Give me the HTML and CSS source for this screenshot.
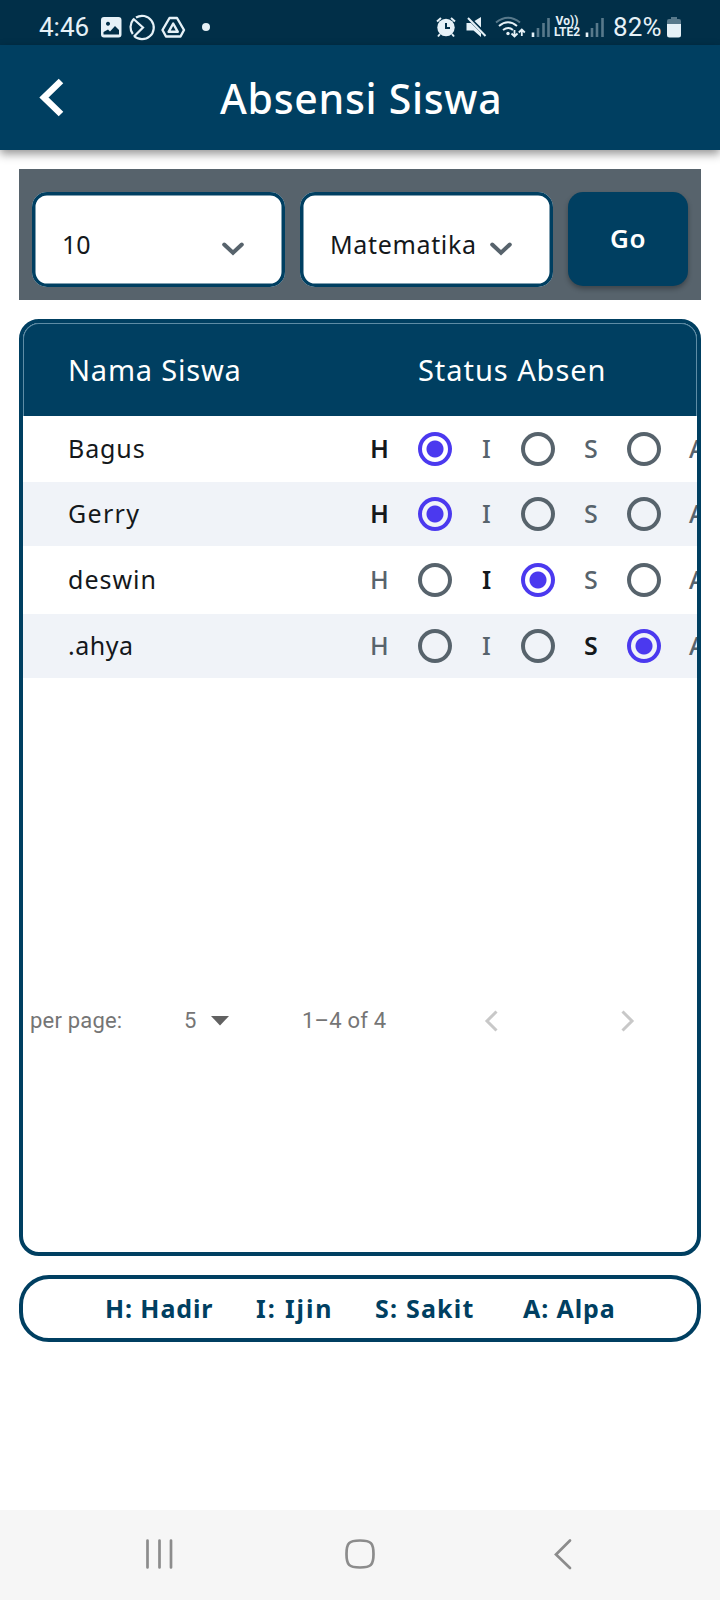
FILE: index.html
```html
<!DOCTYPE html>
<html lang="id">
<head>
<meta charset="utf-8">
<title>Absensi Siswa</title>
<link rel="stylesheet" href="styles.css">
</head>
<body>
<div class="statusbar">
  <span class="clock">4:46</span>
  <svg class="status-left" width="112" height="30" viewBox="100 11 112 30" fill="none" stroke="#e6f1f7" stroke-width="1.8">
    <path fill="#e6f1f7" stroke="none" fill-rule="evenodd" d="M104 16h14.500a3 3 0 0 1 3 3v14.500a3 3 0 0 1-3 3H104a3 3 0 0 1-3-3V19a3 3 0 0 1 3-3zM103.500 31v2.500h15.500V29l-4-4-5 5.500-2-2zM108 20.800a2 2 0 1 0 .01 0z"/>
    <path stroke-width="2.200" d="M136 16.500a11.700 11.700 0 1 1-2 18.500M132.800 33a11.700 11.700 0 0 1 .5-14.500M133 17.500l10 9-9 9"/>
    <path stroke-width="2.400" stroke-linejoin="round" d="M169.500 17h7.500l7 12-3.500 6.500h-14.500l-3.500-6.500zM173.200 22.500l4.600 8.300h-9.200z"/>
    <circle cx="206" cy="26" r="4" fill="#e6f1f7" stroke="none"/>
  </svg>
  <div class="status-right">
    <svg width="118" height="26" viewBox="434 13 118 26" fill="none" stroke="#e6f1f7" stroke-width="2">
      <g>
        <circle cx="446" cy="26.500" r="8.700" fill="#e6f1f7" stroke="none"/>
        <path d="M437 20.500l4-3.500M455 20.500l-4-3.500M440 33l-2 2.500M452 33l2 2.500"/>
        <path stroke="#012f48" d="M446 22v5h4"/>
      </g>
      <path fill="#e6f1f7" stroke="none" d="M466.500 22h4.500l10 10v4l-7.500-6.500h-7zM474.500 20l6.500-4v10.500z"/>
      <path d="M468 17l17.500 18"/>
      <path stroke="#58798b" d="M496 21.500q12-9.500 24 0"/>
      <path d="M499 25q9-7.500 18 0M503 29q5.500-4 10 0"/>
      <circle cx="508" cy="32.500" r="1.700" fill="#e6f1f7" stroke="none"/>
      <path d="M514.500 29v6.500m-3-3l3 3 3-3M521.800 35v-6.500m-3 3l3-3 3 3" stroke-width="1.800"/>
      <path stroke-width="2.600" d="M533 31.500v4.500"/>
      <path stroke="#58798b" stroke-width="2.600" d="M538 27v9M543.500 22v14M548.500 17v19"/>
    </svg>
    <span class="volte"><span>Vo))</span><span>LTE2</span></span>
    <svg width="20" height="26" viewBox="586 13 20 26" fill="none" stroke="#58798b" stroke-width="2.600">
      <path stroke="#e6f1f7" d="M588 31.500v4.500"/>
      <path d="M593 27v9M598 22v14M603.500 17v19"/>
    </svg>
    <span class="percent">82%</span>
    <svg width="16" height="24" viewBox="666 14 16 24">
      <path fill="#58798b" d="M671 16h6v2h2q2 0 2 2v3h-14v-3q0-2 2-2h2z"/>
      <path fill="#e6f1f7" d="M667 23h14v11q0 2.500-2.500 2.500h-9q-2.500 0-2.500-2.500z"/>
    </svg>
  </div>
</div>
<header class="appbar">
  <svg class="back" width="26" height="40" viewBox="39 78 26 40" fill="none" stroke="#fff" stroke-width="6.500"><path d="M61 81L44 97.500 61 114"/></svg>
  <h1 class="title">Absensi Siswa</h1>
</header>
<main>
  <section class="filters">
    <div class="select"><span class="select-value">10</span><svg class="chevron" width="22" height="14" viewBox="0 0 22 14"><path d="M2.200 2.500L11 10.800 19.800 2.500"/></svg></div>
    <div class="select"><span class="select-value subject">Matematika</span><svg class="chevron" width="22" height="14" viewBox="0 0 22 14"><path d="M2.200 2.500L11 10.800 19.800 2.500"/></svg></div>
    <button class="go">Go</button>
  </section>
  <section class="table">
    <div class="thead"><span class="th-name">Nama Siswa</span><span class="th-status">Status Absen</span></div>
    <div class="row row-1"><span class="n-bagus">Bagus</span><b>H</b><i class="radio on"></i><span class="opt">I</span><i class="radio"></i><span class="opt">S</span><i class="radio"></i><span class="opt">A</span></div>
    <div class="row row-2"><span class="n-gerry">Gerry</span><b>H</b><i class="radio on"></i><span class="opt">I</span><i class="radio"></i><span class="opt">S</span><i class="radio"></i><span class="opt">A</span></div>
    <div class="row row-3"><span class="n-deswin">deswin</span><span class="opt">H</span><i class="radio"></i><b>I</b><i class="radio on"></i><span class="opt">S</span><i class="radio"></i><span class="opt">A</span></div>
    <div class="row row-4"><span class="n-ahya">.ahya</span><span class="opt">H</span><i class="radio"></i><span class="opt">I</span><i class="radio"></i><b>S</b><i class="radio on"></i><span class="opt">A</span></div>
    <div class="pager">
      <span>per page:</span><span>5</span>
      <svg width="20" height="12" viewBox="0 0 20 12"><path fill="#616161" d="M1 1h18l-9 9.500z"/></svg>
      <span class="range">1–4 of 4</span>
      <svg width="16" height="24" viewBox="0 0 16 24" fill="none" stroke="#c8c8c8" stroke-width="3"><path d="M13.500 2.500L4 12l9.500 9.500"/></svg>
      <svg width="16" height="24" viewBox="0 0 16 24" fill="none" stroke="#c8c8c8" stroke-width="3"><path d="M2.500 2.500L12 12l-9.500 9.500"/></svg>
    </div>
  </section>
  <section class="legend"><span class="l-hadir">H: Hadir</span><span class="l-ijin">I: Ijin</span><span class="l-sakit">S: Sakit</span><span class="l-alpa">A: Alpa</span></section>
</main>
<nav class="navbar">
  <svg width="30" height="32" viewBox="0 0 30 32"><path d="M3.500 2.500v27M15.500 2.500v27M27 2.500v27"/></svg>
  <svg width="32" height="32" viewBox="0 0 32 32"><path d="M16 2.500C27 2.500 29.500 5 29.500 16S27 29.500 16 29.500 2.500 27 2.500 16 5 2.500 16 2.500z"/></svg>
  <svg width="20" height="32" viewBox="0 0 20 32"><path d="M17 2.500L3 16.500l14 13.500"/></svg>
</nav>
</body>
</html>
```
FILE: styles.css
```css
* { box-sizing: border-box; }
body {
  margin: 0;
  width: 720px;
  height: 1600px;
  display: flex;
  flex-direction: column;
  background: #fff;
  color: #14181b;
  font-family: "Noto Sans", sans-serif;
  font-size: 25px;
  overflow: hidden;
}
svg { display: block; flex: none; }
span, b, h1 { white-space: nowrap; }

.statusbar {
  flex: none;
  height: 45px;
  padding: 8px 38px 0 39px;
  display: flex;
  align-items: center;
  background: #012f48;
  color: #e6f1f7;
  font-family: Roboto, sans-serif;
  font-size: 26px;
}
.clock { width: 61px; }
.status-right { margin-left: auto; display: flex; align-items: center; }
.volte {
  width: 28px;
  margin: 0 4px 0 1px;
  display: flex;
  flex-direction: column;
  align-items: center;
  font-size: 12px;
  font-weight: 700;
  line-height: 11px;
}
.percent { width: 53px; margin: 0 0 0 8px; letter-spacing: .2px; }

.appbar {
  flex: none;
  position: relative;
  height: 105px;
  padding-left: 39px;
  display: flex;
  align-items: center;
  background: #003f61;
  color: #fff;
  box-shadow: 0 4px 9px rgba(0, 0, 0, .42);
}
.title {
  margin: 0 0 0 155px;
  font-size: 41px;
  font-weight: 500;
  line-height: 54px;
  letter-spacing: .7px;
}

main { padding: 18.500px 19px 0; }
.filters {
  height: 131.500px;
  padding: 23px 13px 13px;
  display: flex;
  background: #57636c;
}
.select {
  width: 253px;
  height: 95px;
  margin-right: 15px;
  padding: 9px 41px 0 30px;
  display: flex;
  align-items: center;
  justify-content: space-between;
  box-shadow: inset 0 0 0 3.500px #003f61;
  border-radius: 15px;
  background: #fff;
}
.chevron {
  margin-top: 10px;
  fill: none;
  stroke: #57636c;
  stroke-width: 4;
  stroke-linecap: round;
}
.subject { letter-spacing: .65px; }
.go {
  width: 120px;
  height: 94px;
  padding: 0 0 2px;
  border: 0;
  border-radius: 15px;
  background: #003f61;
  color: #fff;
  font: 600 26px "Noto Sans", sans-serif;
  letter-spacing: .6px;
  box-shadow: 0 3px 5px rgba(0, 0, 0, .3);
}

.table {
  height: 937px;
  margin-top: 18.500px;
  display: flex;
  flex-direction: column;
  border: 4px solid #003f61;
  border-radius: 20px;
  overflow: hidden;
}
.thead {
  flex: none;
  height: 93px;
  padding: 1px 0 0 45px;
  display: flex;
  align-items: center;
  background: #003f61;
  box-shadow: inset 0 1px #5e8ca5, inset 1px 0 #5e8ca5, inset -1px 0 #5e8ca5;
  border-radius: 16px 16px 0 0;
  color: #fff;
  font-size: 29px;
}
.th-name { width: 350px; letter-spacing: .8px; }
.th-status { letter-spacing: .95px; }
.row {
  flex: none;
  padding-left: 45px;
  display: grid;
  grid-template-columns: 302px 48px 64px 39px 63px 43px 62px 30px;
  align-items: center;
}
.row span, .row b { padding-bottom: 2px; }
.row b { font-weight: 600; }
.row-1 { height: 66px; }
.row-2 { height: 64px; padding-top: 1px; background: #f0f3f8; }
.row-3 { height: 68px; }
.row-4 { height: 64px; background: #f0f3f8; }
.n-bagus { letter-spacing: .9px; }
.n-gerry { letter-spacing: 1.300px; }
.n-deswin { letter-spacing: 1px; }
.n-ahya { letter-spacing: .5px; }
.row .opt { color: #57636c; font-weight: 500; }
.radio {
  width: 34px;
  height: 34px;
  box-shadow: inset 0 0 0 4px #57636c;
  border-radius: 50%;
}
.radio.on {
  box-shadow: inset 0 0 0 4px #4b39ef;
  background: radial-gradient(circle, #4b39ef 8px, transparent 9px);
}
.pager {
  margin-top: 326px;
  height: 34px;
  padding-left: 7px;
  display: grid;
  grid-template-columns: 154px 26px 92px 181px 137px 16px;
  align-items: center;
  color: #757575;
  font-family: Roboto, sans-serif;
  font-size: 22px;
  letter-spacing: .2px;
}

.legend {
  height: 67px;
  margin-top: 19px;
  padding: 0 0 1px 82px;
  display: grid;
  grid-template-columns: 151px 119px 148px auto;
  align-items: center;
  border: 4px solid #003f61;
  border-radius: 30px;
  color: #003f61;
  font-weight: 700;
}
.l-hadir { letter-spacing: .9px; }
.l-ijin { letter-spacing: 1.900px; }
.l-sakit { letter-spacing: 1.200px; }
.l-alpa { letter-spacing: .9px; }

.navbar {
  flex: none;
  height: 90px;
  margin-top: auto;
  padding: 0 147px 2px 144px;
  display: grid;
  grid-template-columns: 200px 1fr 20px;
  align-items: center;
  background: #f6f6f6;
}
.navbar path {
  fill: none;
  stroke: #8c8c8c;
  stroke-width: 2.700;
  stroke-linecap: round;
}
```
